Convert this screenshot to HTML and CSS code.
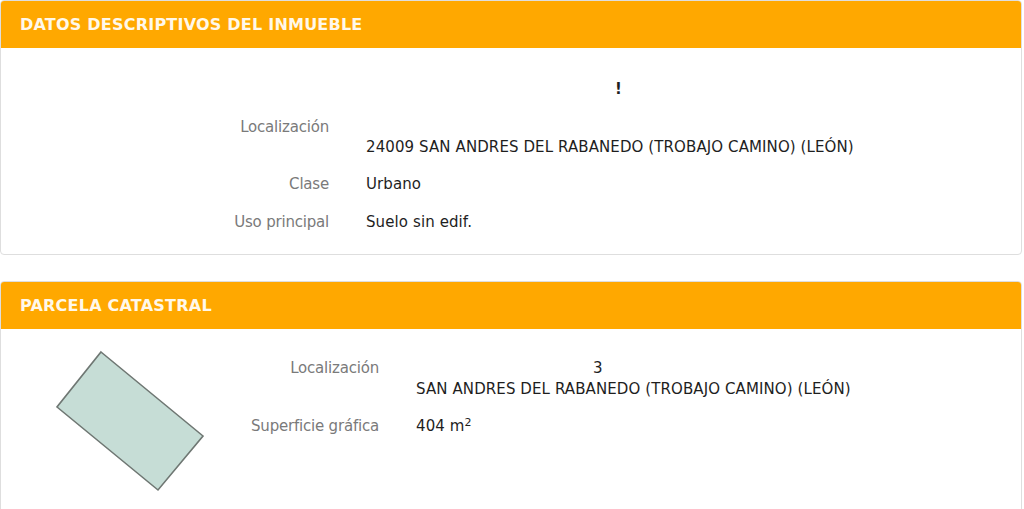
FILE: index.html
```html
<!DOCTYPE html>
<html lang="es">
<head>
<meta charset="utf-8">
<title>Datos descriptivos</title>
<link rel="stylesheet" href="styles.css">
</head>
<body>
<section class="panel panel-first">
  <header class="panel-head"><h2 class="panel-title">DATOS DESCRIPTIVOS DEL INMUEBLE</h2></header>
  <div class="panel-body">
    <dl class="fields fields-wide">
      <dt class="label"></dt>
      <dd class="value value-mark">!</dd>
      <dt class="label">Localización</dt>
      <dd class="value"><span class="line">&nbsp;</span><span class="line">24009 SAN ANDRES DEL RABANEDO (TROBAJO CAMINO) (LEÓN)</span></dd>
      <dt class="label">Clase</dt>
      <dd class="value">Urbano</dd>
      <dt class="label">Uso principal</dt>
      <dd class="value">Suelo sin edif.</dd>
    </dl>
  </div>
</section>

<section class="panel panel-second">
  <header class="panel-head"><h2 class="panel-title">PARCELA CATASTRAL</h2></header>
  <div class="panel-body parcel-body">
    <div class="parcel-map">
      <svg width="240" height="180" viewBox="0 0 240 180">
        <polygon points="100,23 202,107 157,161 56,78" fill="#c6ddd6" stroke="#6f7773" stroke-width="1.6"/>
      </svg>
    </div>
    <dl class="fields fields-parcel">
      <dt class="label">Localización</dt>
      <dd class="value"><span class="line line-mark">3</span><span class="line">SAN ANDRES DEL RABANEDO (TROBAJO CAMINO) (LEÓN)</span></dd>
      <dt class="label">Superficie gráfica</dt>
      <dd class="value">404 m<sup class="sup">2</sup></dd>
    </dl>
  </div>
</section>
</body>
</html>
```

FILE: styles.css
```css
html, body {
  margin: 0;
  padding: 0;
  background: #ffffff;
}

body {
  font-family: "DejaVu Sans", Verdana, sans-serif;
  color: #222;
  padding-right: 2px;
}

.panel {
  border: 1px solid #dedede;
  border-radius: 4px;
  overflow: hidden;
  background: #fff;
}

.panel-first {
  height: 255px;
  box-sizing: border-box;
}

.panel-second {
  margin-top: 26px;
  height: 260px;
  box-sizing: border-box;
}

.panel-head {
  background: #ffa800;
  height: 47px;
  display: flex;
  align-items: center;
  padding-left: 19px;
}

.panel-title {
  margin: 0;
  font-size: 16px;
  font-weight: bold;
  color: #fff8ea;
  letter-spacing: 0.22px;
}

.panel-body {
  padding-top: 31px;
}

.fields {
  margin: 0;
  display: grid;
  row-gap: 17.5px;
  column-gap: 37px;
  font-size: 15px;
  line-height: 20px;
}

.fields-wide {
  grid-template-columns: 328px 1fr;
}

.label {
  margin: 0;
  text-align: right;
  color: #7a7a7a;
  letter-spacing: -0.2px;
}

.value {
  margin: 0;
  color: #1e1e1e;
  letter-spacing: 0.1px;
}

.value-mark {
  padding-left: 249px;
  font-weight: bold;
}

.line {
  display: block;
}

.line-mark {
  padding-left: 177px;
}

.parcel-body {
  display: flex;
  padding-top: 0;
}

.parcel-map {
  width: 240px;
  flex: none;
}

.parcel-map svg {
  display: block;
}

.fields-parcel {
  grid-template-columns: 138px 1fr;
  padding-top: 29px;
  row-gap: 16px;
  line-height: 21px;
  align-content: start;
}

.sup {
  font-size: 11px;
  line-height: 0;
  vertical-align: 5px;
}
```
